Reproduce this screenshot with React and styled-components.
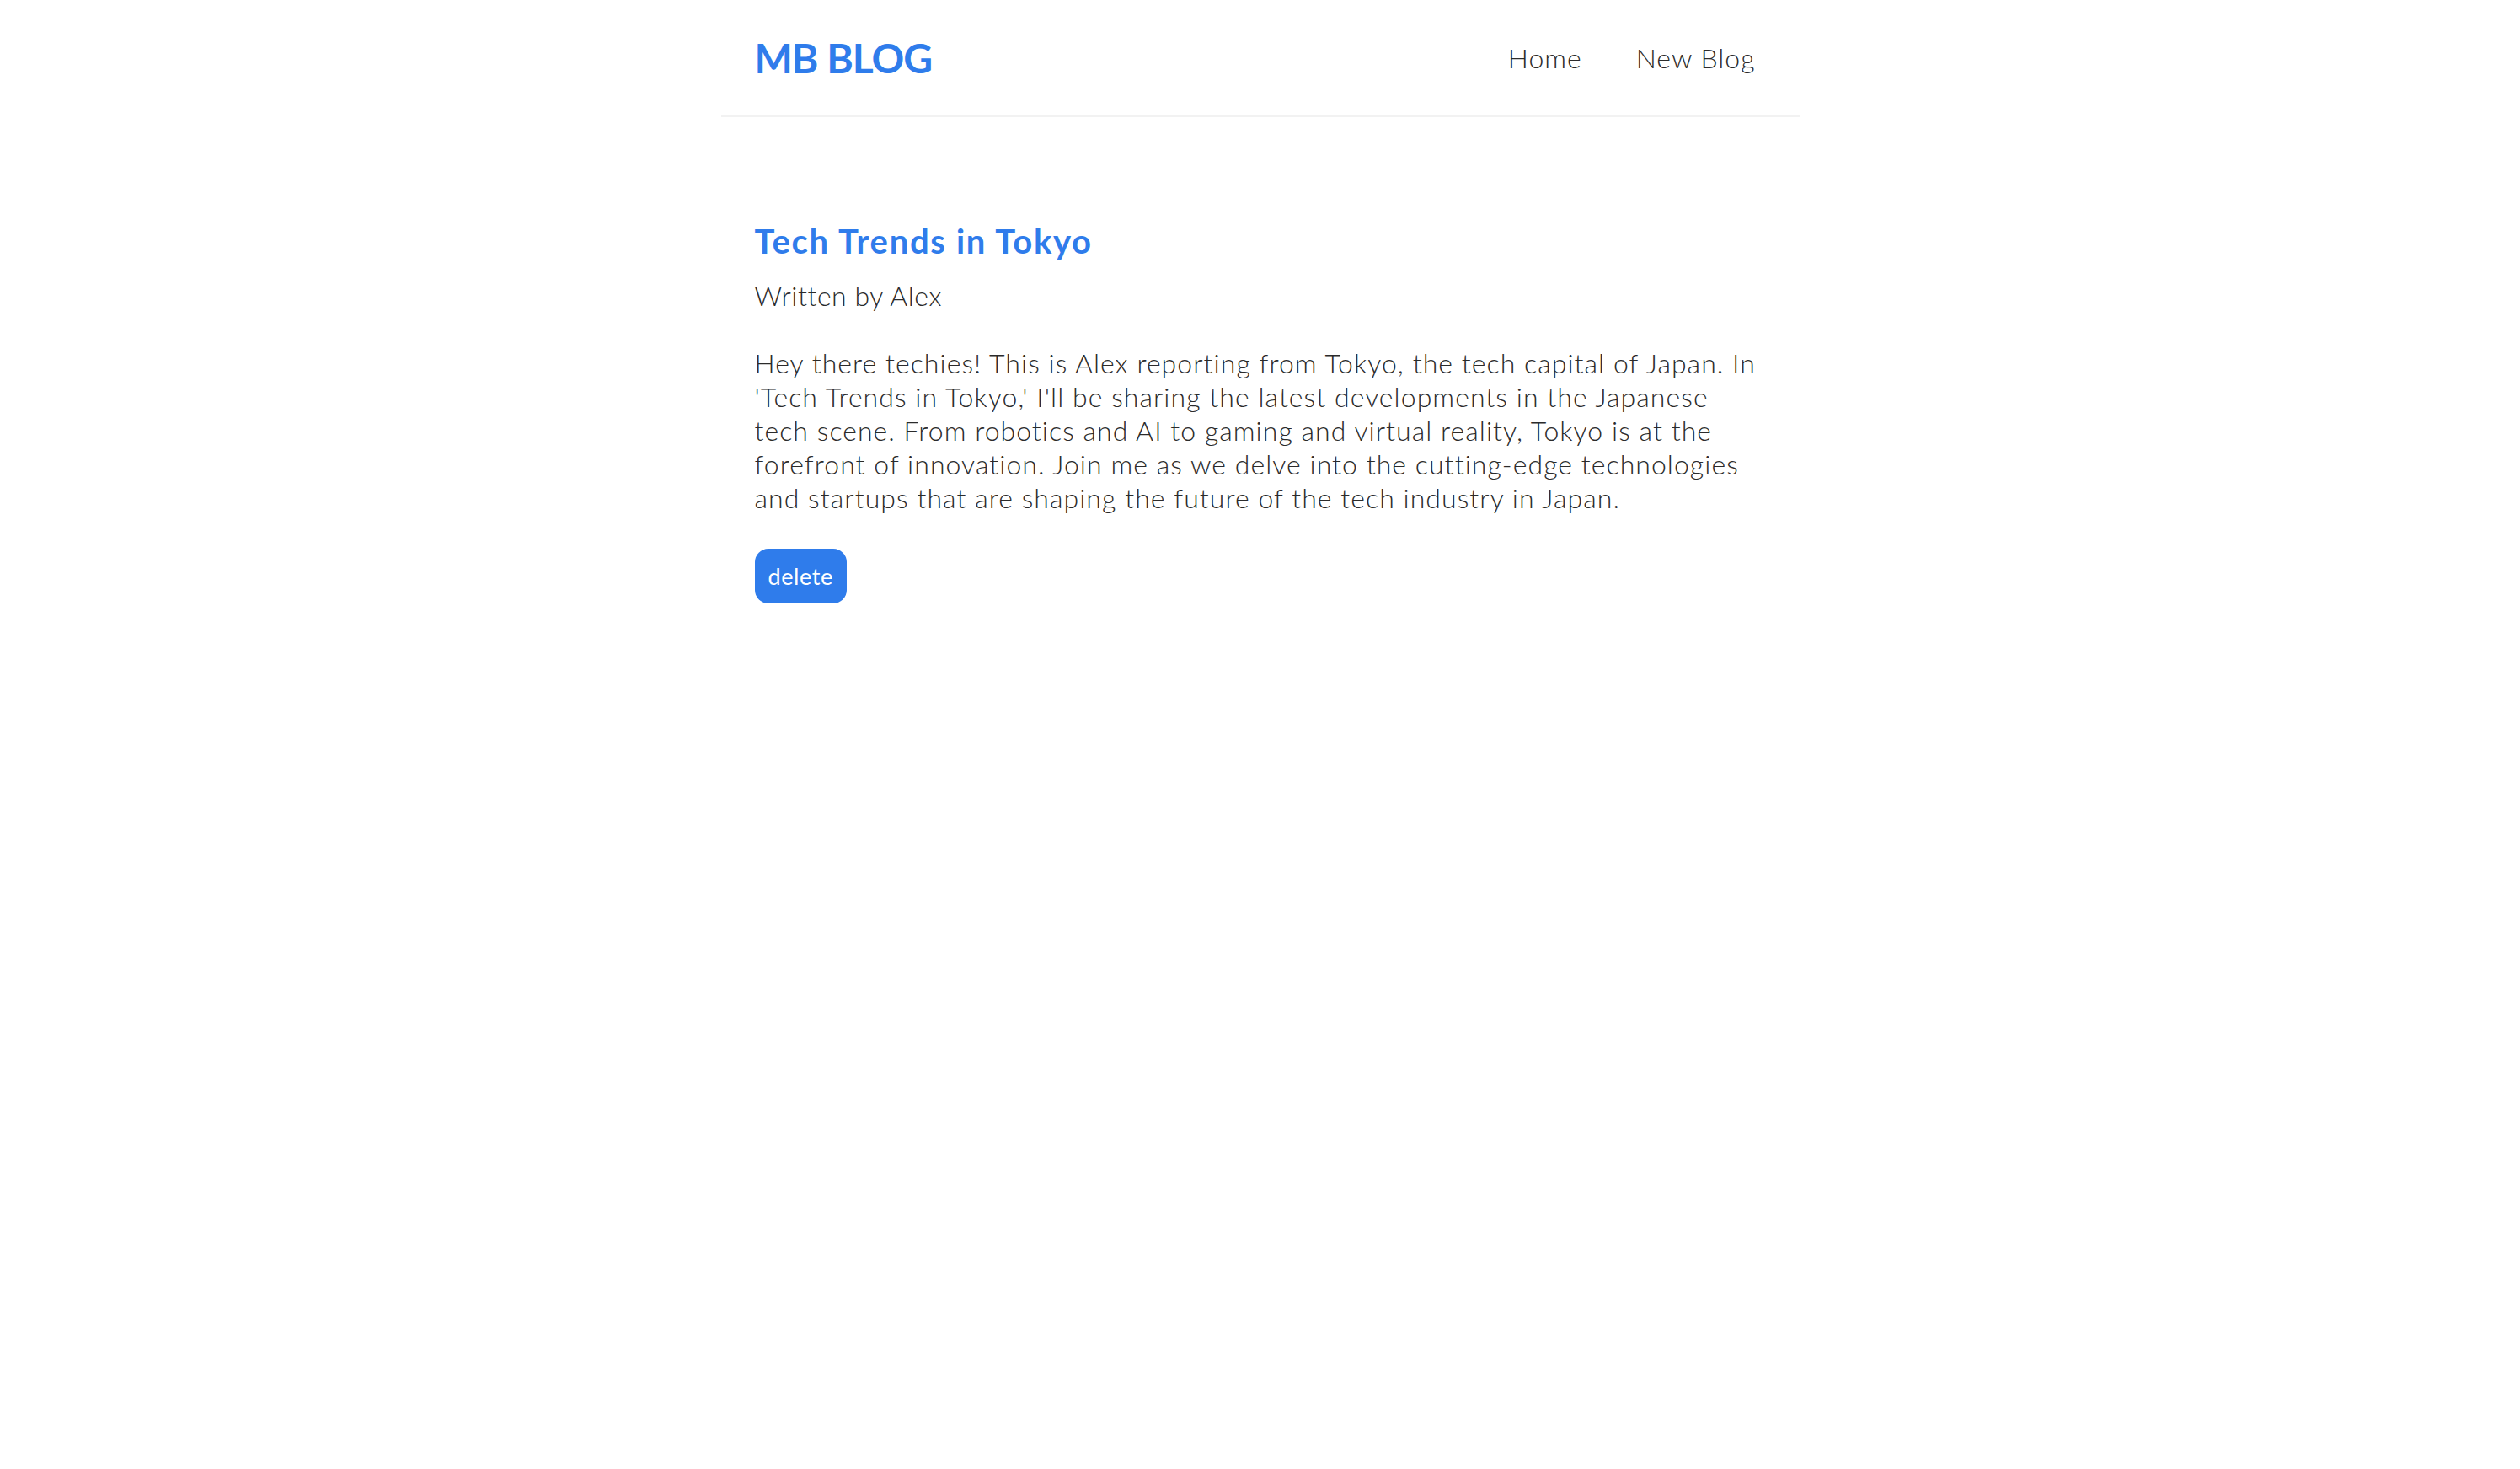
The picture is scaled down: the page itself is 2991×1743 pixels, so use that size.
import React from 'react';
import styled, { createGlobalStyle } from 'styled-components';

const GlobalStyle = createGlobalStyle`
  * {
    margin: 0;
    box-sizing: content-box;
  }
  body {
    margin: 0;
    background: #fff;
    font-family: Lato, "Noto Sans", sans-serif;
    color: #333;
  }
`;

const SNavbar = styled.nav`
  display: flex;
  align-items: center;
  max-width: 1200px;
  margin: 0 auto;
  padding: 40px 40px 41px;
  height: 56px;
  border-bottom: 2px solid #f2f2f2;
`;

const SLogo = styled.h1`
  font-size: 48px;
  font-weight: 700;
  color: #2f7ceb;
  letter-spacing: -1px;
`;

const SLinks = styled.div`
  margin-left: auto;
  display: flex;
  gap: 40px;
`;

const SLink = styled.a`
  padding: 12px;
  font-size: 32px;
  font-weight: 300;
  color: #2b2b2b;
  letter-spacing: 1px;
  text-decoration: none;
  cursor: pointer;
`;

const SContent = styled.main`
  max-width: 1200px;
  margin: 82px auto 80px;
  padding: 40px;
`;

const STitle = styled.h2`
  font-size: 40px;
  line-height: 50px;
  font-weight: 700;
  color: #2f7ceb;
  margin-bottom: 20px;
  letter-spacing: 1.7px;
`;

const SAuthor = styled.p`
  font-size: 32px;
  line-height: 40px;
  font-weight: 300;
  color: #2b2b2b;
  letter-spacing: 0.55px;
`;

const SBody = styled.div`
  margin: 40px 0;
  font-size: 32px;
  line-height: 40px;
  font-weight: 300;
  color: #2b2b2b;
  letter-spacing: 1.05px;
`;

const SButton = styled.button`
  background: #2f7ceb;
  color: #fff;
  border: 0;
  padding: 16px;
  border-radius: 16px;
  font-family: Lato, "Noto Sans", sans-serif;
  font-size: 27px;
  font-weight: 400;
  line-height: 33px;
  letter-spacing: 0.6px;
  cursor: pointer;
`;

const blog = {
  title: 'Tech Trends in Tokyo',
  author: 'Alex',
  body:
    "Hey there techies! This is Alex reporting from Tokyo, the tech capital of Japan. In 'Tech Trends in Tokyo,' I'll be sharing the latest developments in the Japanese tech scene. From robotics and AI to gaming and virtual reality, Tokyo is at the forefront of innovation. Join me as we delve into the cutting-edge technologies and startups that are shaping the future of the tech industry in Japan.",
};

function App() {
  return (
    <>
      <GlobalStyle />
      <SNavbar>
        <SLogo>MB BLOG</SLogo>
        <SLinks>
          <SLink href="#">Home</SLink>
          <SLink href="#">New Blog</SLink>
        </SLinks>
      </SNavbar>
      <SContent>
        <article>
          <STitle>{blog.title}</STitle>
          <SAuthor>Written by {blog.author}</SAuthor>
          <SBody>{blog.body}</SBody>
          <SButton>delete</SButton>
        </article>
      </SContent>
    </>
  );
}

export default App;
